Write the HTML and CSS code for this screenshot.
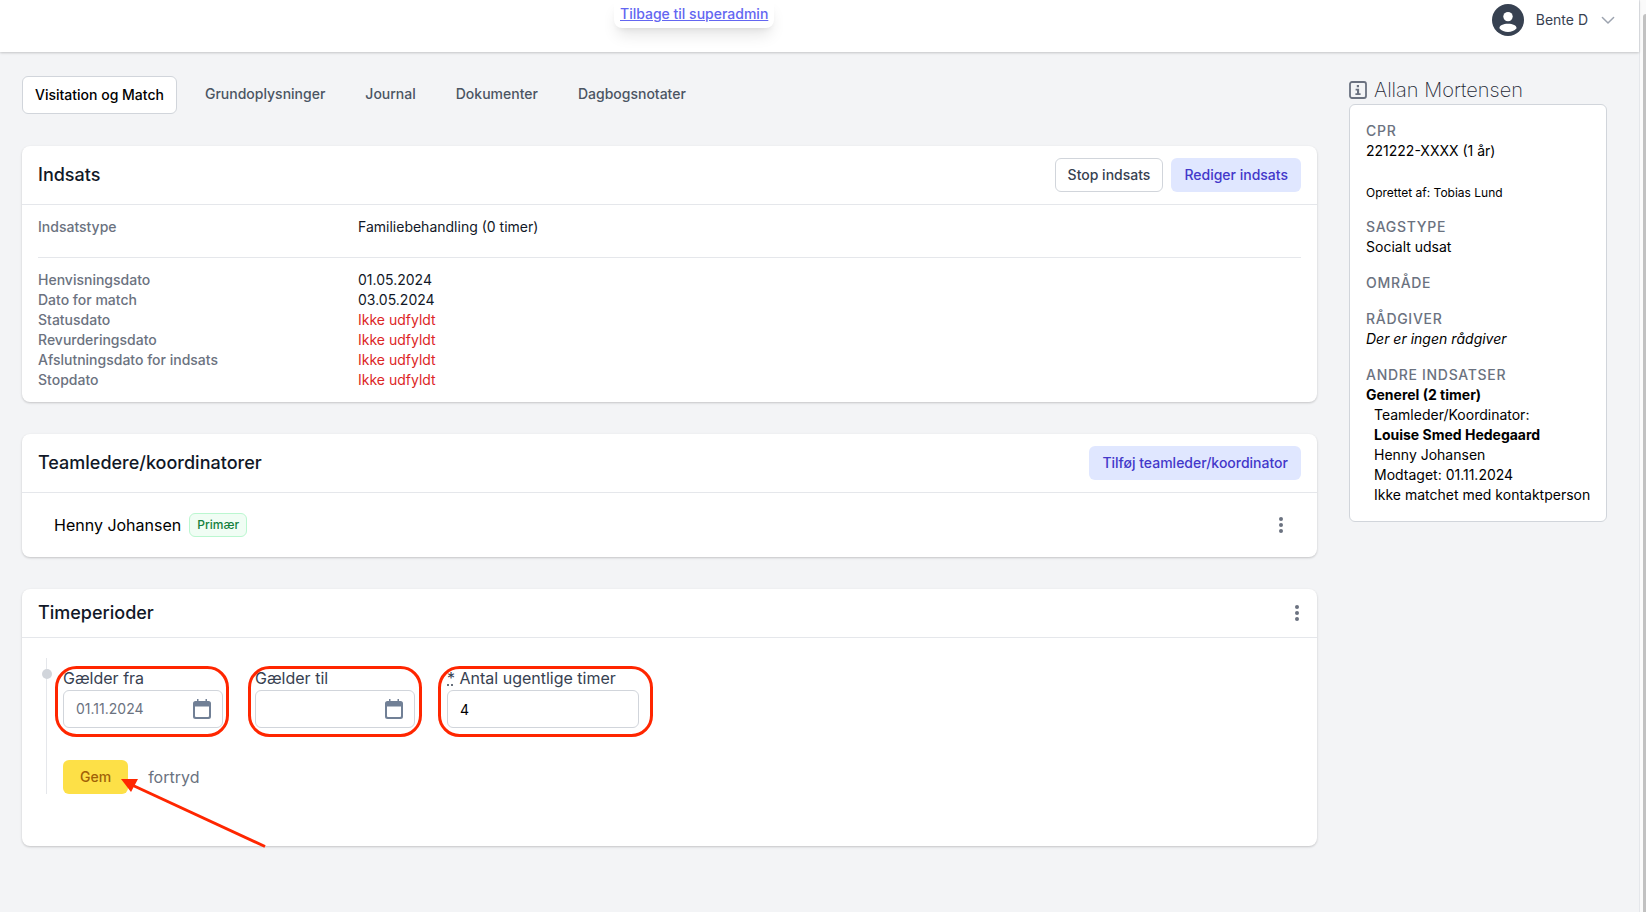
FILE: index.html
```html
<!DOCTYPE html>
<html lang="da">
<head>
    <meta charset="UTF-8">
    <meta name="viewport" content="width=device-width, initial-scale=1.0">
    <title>Visitation og Match</title>
    <link rel="stylesheet" href="styles.css">
</head>
<body>
    <div class="page">
        <header class="topbar">
            <div class="superadmin"><a href="#">Tilbage til superadmin</a></div>
            <button class="user-menu" type="button">
                <svg class="avatar" viewBox="0 0 32 32" aria-hidden="true">
                    <circle cx="16" cy="16" r="16" fill="#374151"/>
                    <circle cx="16" cy="12.6" r="4.7" fill="#fff"/>
                    <path d="M7.4 24.2c0-2.6 3.8-4.4 8.6-4.4s8.6 1.8 8.6 4.4c-2.1 2.5-5.2 3.8-8.6 3.8s-6.5-1.3-8.6-3.8z" fill="#fff"/>
                </svg>
                <span>Bente D</span>
                <svg class="chevron" viewBox="2 2 16 16" aria-hidden="true">
                    <path d="M4.4 7.5L10 13L15.600 7.500" fill="none" stroke="#9ca3af" stroke-width="1.5" stroke-linecap="round" stroke-linejoin="round"/>
                </svg>
            </button>
        </header>

        <div class="content">
            <main class="main">
                <nav class="tabs">
                    <a class="tab active" href="#">Visitation og Match</a>
                    <a class="tab" href="#">Grundoplysninger</a>
                    <a class="tab" href="#">Journal</a>
                    <a class="tab" href="#">Dokumenter</a>
                    <a class="tab" href="#">Dagbogsnotater</a>
                </nav>

                <section class="card">
                    <div class="card-header">
                        <h2>Indsats</h2>
                        <div class="actions">
                            <button class="btn btn-outline" type="button">Stop indsats</button>
                            <button class="btn btn-soft" type="button">Rediger indsats</button>
                        </div>
                    </div>
                    <div class="details">
                        <dl class="detail-list">
                            <dt>Indsatstype</dt><dd>Familiebehandling (0 timer)</dd>
                        </dl>
                        <dl class="detail-list dates">
                            <dt>Henvisningsdato</dt><dd>01.05.2024</dd>
                            <dt>Dato for match</dt><dd>03.05.2024</dd>
                            <dt>Statusdato</dt><dd class="missing">Ikke udfyldt</dd>
                            <dt>Revurderingsdato</dt><dd class="missing">Ikke udfyldt</dd>
                            <dt>Afslutningsdato for indsats</dt><dd class="missing">Ikke udfyldt</dd>
                            <dt>Stopdato</dt><dd class="missing">Ikke udfyldt</dd>
                        </dl>
                    </div>
                </section>

                <section class="card">
                    <div class="card-header">
                        <h2>Teamledere/koordinatorer</h2>
                        <button class="btn btn-soft" type="button">Tilføj teamleder/koordinator</button>
                    </div>
                    <div class="member">
                        <span>Henny Johansen</span>
                        <span class="badge">Primær</span>
                        <button class="dots" type="button" aria-label="Flere valg">
                            <svg viewBox="0 0 24 24" aria-hidden="true">
                                <circle cx="12" cy="6" r="2"/><circle cx="12" cy="12" r="2"/><circle cx="12" cy="18" r="2"/>
                            </svg>
                        </button>
                    </div>
                </section>

                <section class="card">
                    <div class="card-header">
                        <h2>Timeperioder</h2>
                        <button class="dots" type="button" aria-label="Flere valg">
                            <svg viewBox="0 0 24 24" aria-hidden="true">
                                <circle cx="12" cy="6" r="2"/><circle cx="12" cy="12" r="2"/><circle cx="12" cy="18" r="2"/>
                            </svg>
                        </button>
                    </div>
                    <div class="periods">
                        <form class="period-form">
                            <div class="fields">
                                <div class="field">
                                    <label for="from">Gælder fra</label>
                                    <div class="date-box">
                                        <input id="from" type="text" value="01.11.2024">
                                        <svg class="calendar" viewBox="0 0 18 20" aria-hidden="true">
                                            <path d="M2.5 2H4V0h1.5v2h7V0H14v2h1.5A2.5 2.5 0 0 1 18 4.5v13a2.5 2.5 0 0 1-2.5 2.5h-13A2.5 2.5 0 0 1 0 17.5v-13A2.5 2.5 0 0 1 2.5 2zM2 7.5v9.5a1 1 0 0 0 1 1h12a1 1 0 0 0 1-1V7.5z" fill="#718096" fill-rule="evenodd"/>
                                        </svg>
                                    </div>
                                </div>
                                <div class="field">
                                    <label for="to">Gælder til</label>
                                    <div class="date-box">
                                        <input id="to" type="text">
                                        <svg class="calendar" viewBox="0 0 18 20" aria-hidden="true">
                                            <path d="M2.5 2H4V0h1.5v2h7V0H14v2h1.5A2.5 2.5 0 0 1 18 4.5v13a2.5 2.5 0 0 1-2.5 2.5h-13A2.5 2.5 0 0 1 0 17.5v-13A2.5 2.5 0 0 1 2.5 2zM2 7.5v9.5a1 1 0 0 0 1 1h12a1 1 0 0 0 1-1V7.5z" fill="#718096" fill-rule="evenodd"/>
                                        </svg>
                                    </div>
                                </div>
                                <div class="field field-wide">
                                    <label for="hours"><abbr title="påkrævet">*</abbr> Antal ugentlige timer</label>
                                    <input id="hours" class="hours" type="text" value="4">
                                </div>
                            </div>
                            <div class="form-actions">
                                <button class="btn btn-save" type="button">Gem</button>
                                <a class="cancel" href="#">fortryd</a>
                            </div>

                            <!-- guide markers on top of the form -->
                            <svg class="markers" viewBox="0 0 640 200" width="640" height="200" aria-hidden="true">
                                <g fill="none" stroke="#ff2600" stroke-width="3">
                                    <rect x="9.5" y="9.5" width="171" height="68" rx="20"/>
                                    <rect x="202.500" y="9.5" width="171" height="68" rx="20"/>
                                    <rect x="392.500" y="9.5" width="212" height="68" rx="20"/>
                                    <path d="M218 188.500L85 127"/>
                                </g>
                                <path d="M74 121L91 121L84 134z" fill="#ff2600"/>
                            </svg>
                        </form>
                    </div>
                </section>
            </main>

            <aside class="sidebar">
                <h1 class="person">
                    <svg viewBox="0 0 18 18" aria-hidden="true">
                        <rect x="1" y="1" width="16" height="16" rx="2" fill="none" stroke="#6b7280" stroke-width="1.8"/>
                        <path d="M7.8 4h2.200v2.200h-2.200zM6.600 7.700h3.500v4.500h1.500v1.700H6.400v-1.700h1.600V9.400H6.600z" fill="#6b7280"/>
                    </svg>
                    <span>Allan Mortensen</span>
                </h1>
                <div class="info">
                    <div>
                        <h3>CPR</h3>
                        <p>221222-XXXX (1 år)</p>
                        <p class="created">Oprettet af: Tobias Lund</p>
                    </div>
                    <div>
                        <h3>SAGSTYPE</h3>
                        <p>Socialt udsat</p>
                    </div>
                    <div>
                        <h3>OMRÅDE</h3>
                    </div>
                    <div>
                        <h3>RÅDGIVER</h3>
                        <p><em>Der er ingen rådgiver</em></p>
                    </div>
                    <div>
                        <h3>ANDRE INDSATSER</h3>
                        <p><strong>Generel (2 timer)</strong></p>
                        <div class="effort">
                            <p>Teamleder/Koordinator:</p>
                            <p><strong>Louise Smed Hedegaard</strong></p>
                            <p>Henny Johansen</p>
                            <p>Modtaget: 01.11.2024</p>
                            <p>Ikke matchet med kontaktperson</p>
                        </div>
                    </div>
                </div>
            </aside>
        </div>
    </div>
    <div class="scroll-track"><div class="scroll-thumb"></div></div>
</body>
</html>
```
FILE: styles.css
```css
* {
    box-sizing: border-box;
    margin: 0;
    padding: 0;
}

body {
    display: flex;
    min-height: 100vh;
    font-family: Inter, "Liberation Sans", sans-serif;
    font-size: 14px;
    line-height: 20px;
    color: #000;
    background-color: #f3f4f6;
}

button, input {
    font: inherit;
}

button {
    cursor: pointer;
}

a {
    color: inherit;
    text-decoration: none;
}

.page {
    flex: 1;
    min-width: 0;
}

/* TOP BAR */
.topbar {
    position: relative;
    display: flex;
    justify-content: flex-end;
    padding: 4px 23px 16px;
    background-color: white;
    box-shadow: 0 1px 3px rgba(0, 0, 0, 0.1), 0 1px 2px rgba(0, 0, 0, 0.1);
}

.superadmin {
    position: absolute;
    top: 0;
    left: 614px;
    padding: 4px 6px;
    color: #6366f1;
    font-weight: 500;
    background-color: white;
    border-radius: 0 0 8px 8px;
    box-shadow: 0 10px 15px -3px rgba(0, 0, 0, 0.1), 0 4px 6px -4px rgba(0, 0, 0, 0.1);
}

.superadmin a {
    text-decoration: underline;
}

.user-menu {
    display: flex;
    align-items: center;
    gap: 12px;
    border: none;
    background: none;
    color: #374151;
}

.avatar {
    width: 32px;
    height: 32px;
}

.chevron {
    width: 16px;
    height: 16px;
}

/* PAGE COLUMNS */
.content {
    display: grid;
    grid-template-columns: minmax(0, 1fr) 258px;
    gap: 32px;
    padding: 24px 32px 24px 22px;
}

.tabs {
    display: flex;
    align-items: flex-start;
    gap: 16px;
    margin-bottom: 32px;
}

.tab {
    padding: 8px 12px;
    font-weight: 500;
    color: #4b5563;
}

.tab.active {
    color: #000;
    background-color: white;
    border: 1px solid #d1d5db;
    border-radius: 6px;
}

/* CARDS */
.card {
    margin-bottom: 32px;
    background-color: white;
    border-radius: 8px;
    box-shadow: 0 1px 3px rgba(0, 0, 0, 0.1), 0 1px 2px rgba(0, 0, 0, 0.1);
}

.card-header {
    display: flex;
    justify-content: space-between;
    align-items: center;
    padding: 12px 16px;
    border-bottom: 1px solid #e5e7eb;
}

.card-header h2 {
    font-size: 18px;
    line-height: 24px;
    font-weight: 500;
    color: #111827;
}

.actions {
    display: flex;
    gap: 8px;
}

.btn {
    padding: 6px 12px;
    border: 1px solid transparent;
    border-radius: 6px;
    font-weight: 500;
}

.btn-outline {
    border-color: #d1d5db;
    background-color: white;
    color: #374151;
}

.btn-soft {
    background-color: #e0e7ff;
    color: #4338ca;
}

.btn-save {
    padding: 6px 16px;
    background-color: #fde047;
    color: #a16207;
}

.details {
    padding: 12px 16px;
}

.detail-list {
    display: grid;
    grid-template-columns: 320px 1fr;
    color: #111827;
}

.detail-list dt {
    font-weight: 500;
    color: #6b7280;
}

.detail-list .missing {
    color: #dc2626;
}

.dates {
    margin-top: 20px;
    padding-top: 12px;
    border-top: 1px solid #e5e7eb;
}

.member {
    display: flex;
    align-items: center;
    gap: 8px;
    padding: 20px 24px 20px 32px;
    font-size: 16px;
    line-height: 24px;
}

.badge {
    padding: 3px 7px;
    border: 1px solid #bbf7d0;
    border-radius: 6px;
    background-color: #f0fdf4;
    color: #15803d;
    font-size: 12px;
    line-height: 16px;
    font-weight: 500;
}

.dots {
    width: 24px;
    height: 24px;
    border: none;
    background: none;
    fill: #6b7280;
}

.member .dots {
    margin-left: auto;
}

.card-header .dots {
    margin-right: -8px;
}

/* PERIOD FORM */
.periods {
    padding: 20px 24px 52px;
}

.period-form {
    position: relative;
    padding: 8px 0 0 16px;
    border-left: 1px solid #e5e7eb;
}

.period-form::before {
    content: "";
    position: absolute;
    top: 11px;
    left: -5px;
    width: 10px;
    height: 10px;
    border-radius: 50%;
    background-color: #d1d5db;
}

.fields {
    display: flex;
    gap: 32px;
}

.field {
    width: 160px;
}

.field-wide {
    width: 192px;
}

.field label {
    display: block;
    font-size: 16px;
    line-height: 24px;
    color: #374151;
}

.field abbr {
    text-decoration: underline dotted;
}

.date-box, .hours {
    display: flex;
    align-items: center;
    width: 100%;
    height: 38px;
    padding: 0 11px 0 12px;
    border: 1px solid #d1d5db;
    border-radius: 6px;
    background-color: white;
}

.date-box input {
    flex: 1;
    min-width: 0;
    border: none;
    outline: none;
    color: #6b7280;
}

.calendar {
    width: 18px;
    height: 20px;
}

.form-actions {
    display: flex;
    align-items: center;
    gap: 20px;
    margin-top: 32px;
}

.cancel {
    font-size: 16px;
    color: #6b7280;
}

.markers {
    position: absolute;
    top: 0;
    left: 0;
    pointer-events: none;
}

/* SIDEBAR */
.person {
    display: flex;
    align-items: center;
    gap: 7px;
    height: 28px;
    font-size: 20px;
    line-height: 28px;
    font-weight: 200;
    color: #1f2937;
}

.person svg {
    width: 18px;
    height: 18px;
}

.info {
    display: flex;
    flex-direction: column;
    gap: 16px;
    padding: 16px;
    border: 1px solid #d1d5db;
    border-radius: 6px;
    background-color: white;
    white-space: nowrap;
}

.info h3 {
    font-size: 14px;
    font-weight: 500;
    letter-spacing: 0.05em;
    color: #6b7280;
}

.created {
    margin-top: 24px;
    font-size: 12px;
    line-height: 16px;
}

.effort {
    padding-left: 8px;
}

/* SCROLLBAR */
.scroll-track {
    width: 7px;
    padding: 14px 0 0 3px;
    border-left: 1px solid #e5e7eb;
    background-color: #fafafa;
}

.scroll-thumb {
    height: 100%;
    background-color: #c1c1c1;
    border-radius: 4px 0 0 0;
}
```
